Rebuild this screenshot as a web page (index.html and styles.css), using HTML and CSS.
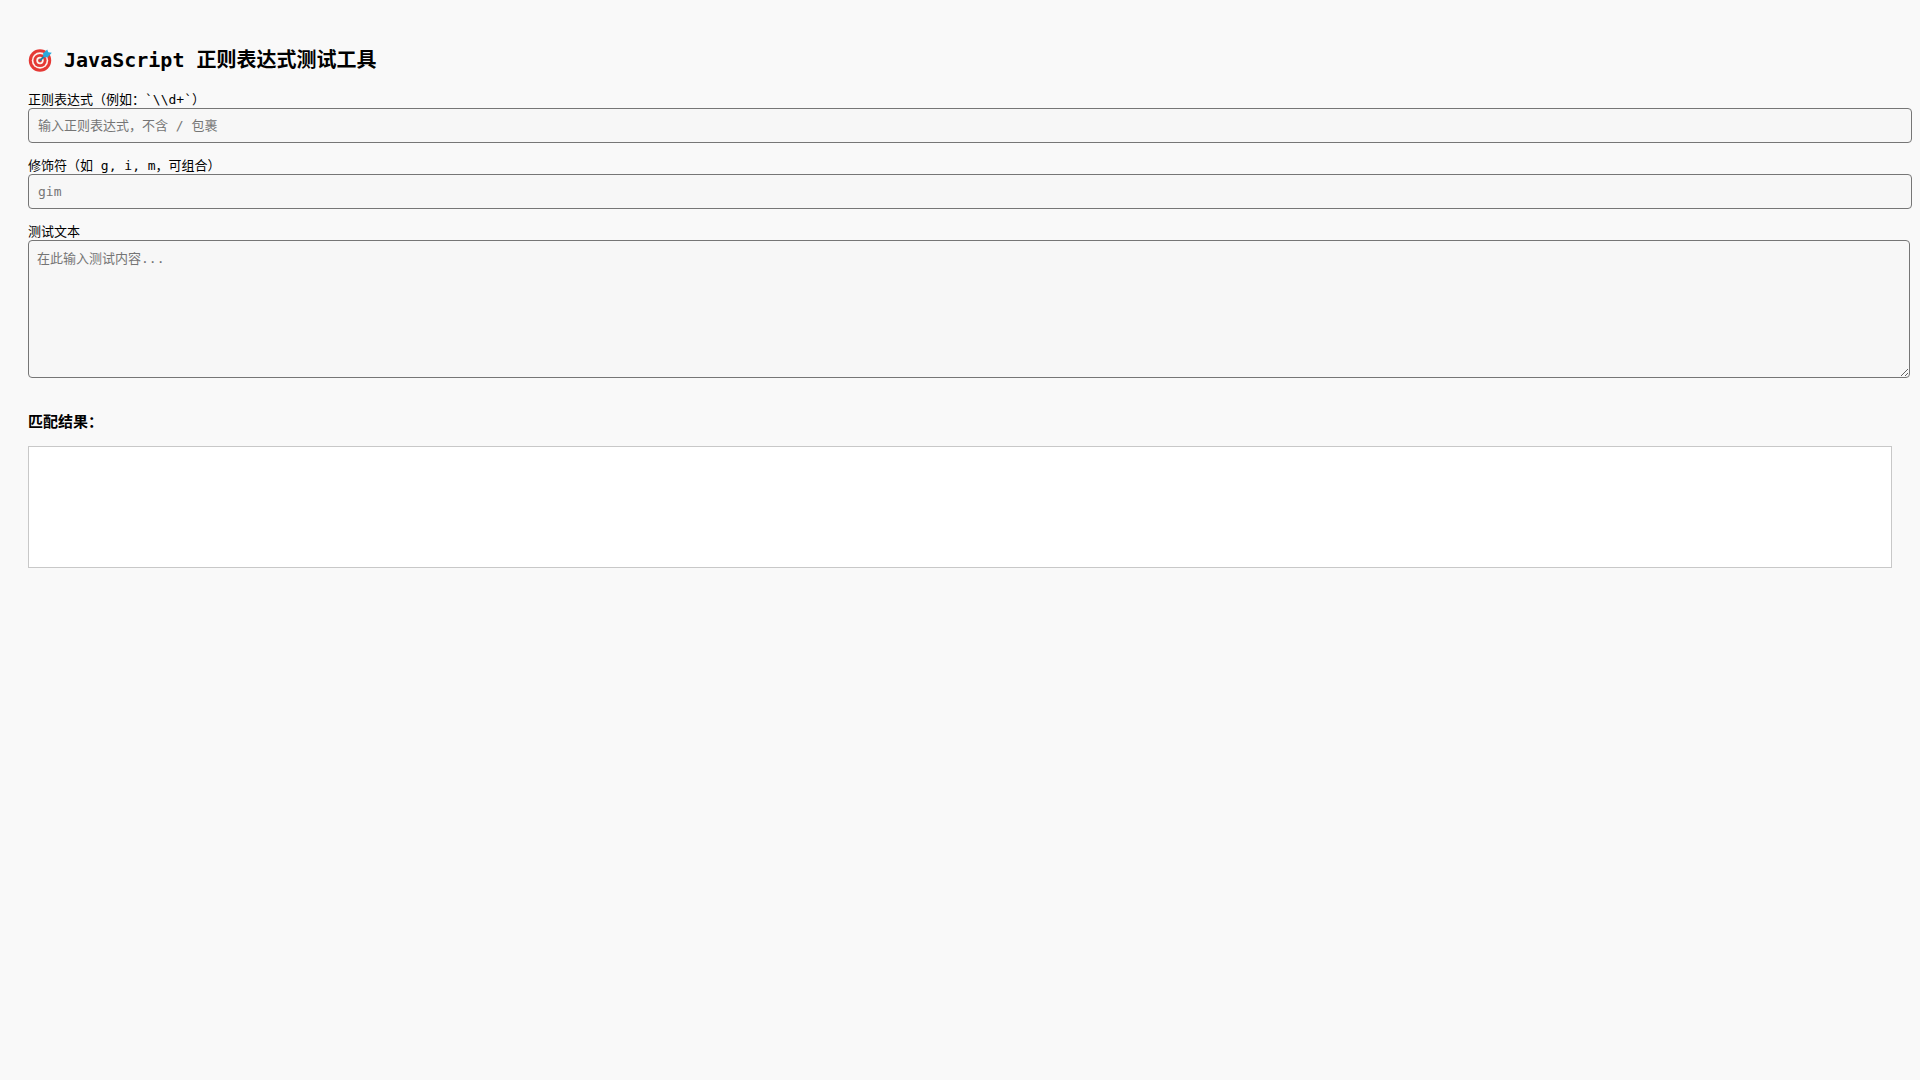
FILE: index.html
```html
<!DOCTYPE html>
<html lang="zh-CN">
<head>
<meta charset="UTF-8">
<title>JavaScript 正则表达式测试工具</title>
<link rel="stylesheet" href="styles.css">
</head>
<body>
<h2><svg class="target" viewBox="0 0 24 24" aria-hidden="true"><circle cx="12" cy="12.500" r="11.200" fill="#e53935"/><circle cx="12" cy="12.500" r="8.200" fill="#fbf3ee"/><circle cx="12" cy="12.500" r="6.600" fill="#e53935"/><circle cx="12" cy="12.500" r="3.700" fill="#fbf3ee"/><circle cx="12" cy="12.500" r="1.900" fill="#e53935"/><path d="M12 12.500 18 6.500" stroke="#1c7fa8" stroke-width="1.800"/><path d="M15 5.500 19.200 1.500 20.300 4.300 23.800 4.800 19.500 9.500 15.500 9Z" fill="#29a9dc"/></svg> JavaScript 正则表达式测试工具</h2>
<label for="pattern">正则表达式（例如：`\\d+`）</label>
<input class="field field-line" type="text" id="pattern" placeholder="输入正则表达式，不含 / 包裹">
<label for="flags">修饰符（如 g, i, m，可组合）</label>
<input class="field field-line" type="text" id="flags" placeholder="gim">
<label for="text">测试文本</label>
<textarea class="field field-area" id="text" rows="6" placeholder="在此输入测试内容..."></textarea>
<h3>匹配结果：</h3>
<div class="result"></div>
</body>
</html>
```

FILE: styles.css
```css
body {
  margin: 0;
  padding: 28px;
  background: #f9f9f9;
  color: #000;
  font-family: "DejaVu Sans Mono", "Noto Sans CJK SC", monospace;
  font-size: 13px;
}

h2 {
  margin: 17px 0;
  font-size: 20px;
  line-height: 30px;
}

h3 {
  margin: 33px 0 13px;
  font-size: 15px;
  line-height: 22px;
}

.target {
  width: 24px;
  height: 24px;
  vertical-align: -5px;
}

label {
  display: block;
  line-height: 16px;
}

.field {
  display: block;
  width: 100%;
  margin: 0 0 15px;
  border: 1px solid #767676;
  border-radius: 4px;
  background: #f7f7f7;
  font-family: inherit;
  font-size: 13px;
}

.field::placeholder {
  color: #757575;
}

.field-line {
  height: 17px;
  padding: 8px 9px;
}

.field-area {
  padding: 8px;
  line-height: 20px;
}

.result {
  min-height: 100px;
  padding: 10px;
  border: 1px solid #c8c8c8;
  background: #fff;
}
```
